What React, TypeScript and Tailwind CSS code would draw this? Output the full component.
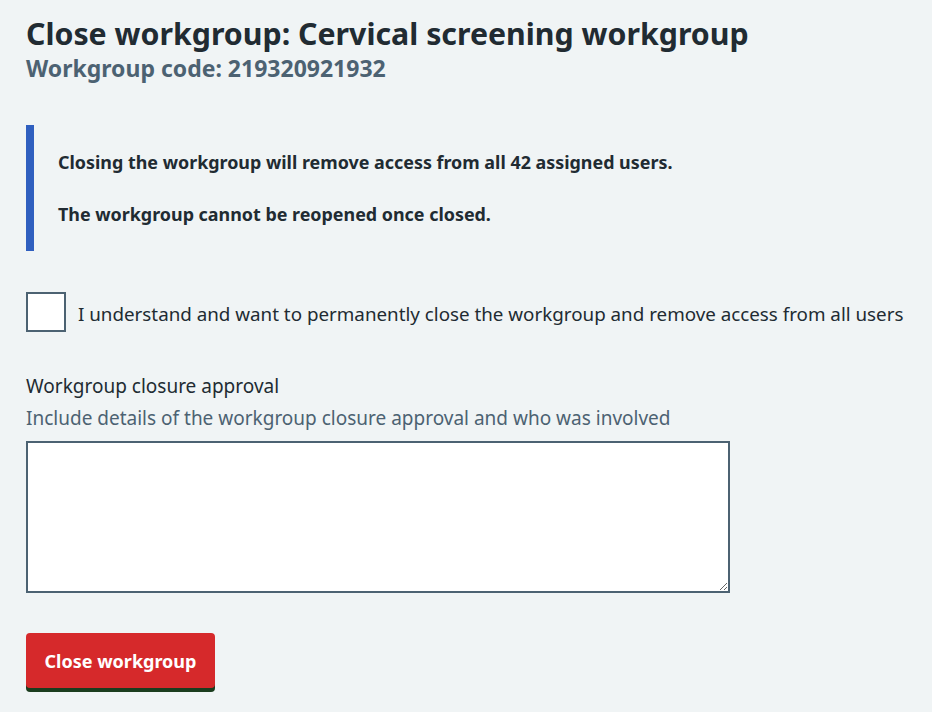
export default function App() {
  return (
    <div
      className="min-h-[712px] bg-[#f0f4f5] px-[26px] pt-[14px] text-[#212b32]"
      style={{ fontFamily: '"Noto Sans", Arial, sans-serif' }}
    >
      <h1 className="text-[30.3px] font-bold leading-[40px]">
        Close workgroup: Cervical screening workgroup
      </h1>
      <p className="text-[23px] font-bold leading-[28px] text-[#4c6272]">
        Workgroup code: 219320921932
      </p>

      <div className="mt-[43px] border-l-8 border-[#2f5fbf] py-[24px] pl-[24px] text-[17.9px] font-bold leading-[26px]">
        <p>Closing the workgroup will remove access from all 42 assigned users.</p>
        <p className="mt-[26px]">The workgroup cannot be reopened once closed.</p>
      </div>

      <label className="mt-[41px] flex items-center gap-[12px]">
        <span className="h-[40px] w-[40px] shrink-0 border-2 border-[#4c6272] bg-white" />
        <span className="whitespace-nowrap pt-[4px] text-[18.8px] leading-[28px]">
          I understand and want to permanently close the workgroup and remove access from all users
        </span>
      </label>

      <div className="mt-[40px]">
        <p className="text-[19px] leading-[28px]">Workgroup closure approval</p>
        <p className="mt-[4px] text-[19px] leading-[28px] text-[#4c6272]">
          Include details of the workgroup closure approval and who was involved
        </p>
        <textarea className="mt-[9px] block h-[152px] w-[704px] border-2 border-[#4c6272] bg-white" />
      </div>

      <button className="mt-[40px] h-[55px] w-[189px] rounded-[4px] bg-[#d6292b] text-[18px] font-bold leading-[30px] text-white shadow-[0_4px_0_#1b3d1e]">
        Close workgroup
      </button>
    </div>
  );
}
